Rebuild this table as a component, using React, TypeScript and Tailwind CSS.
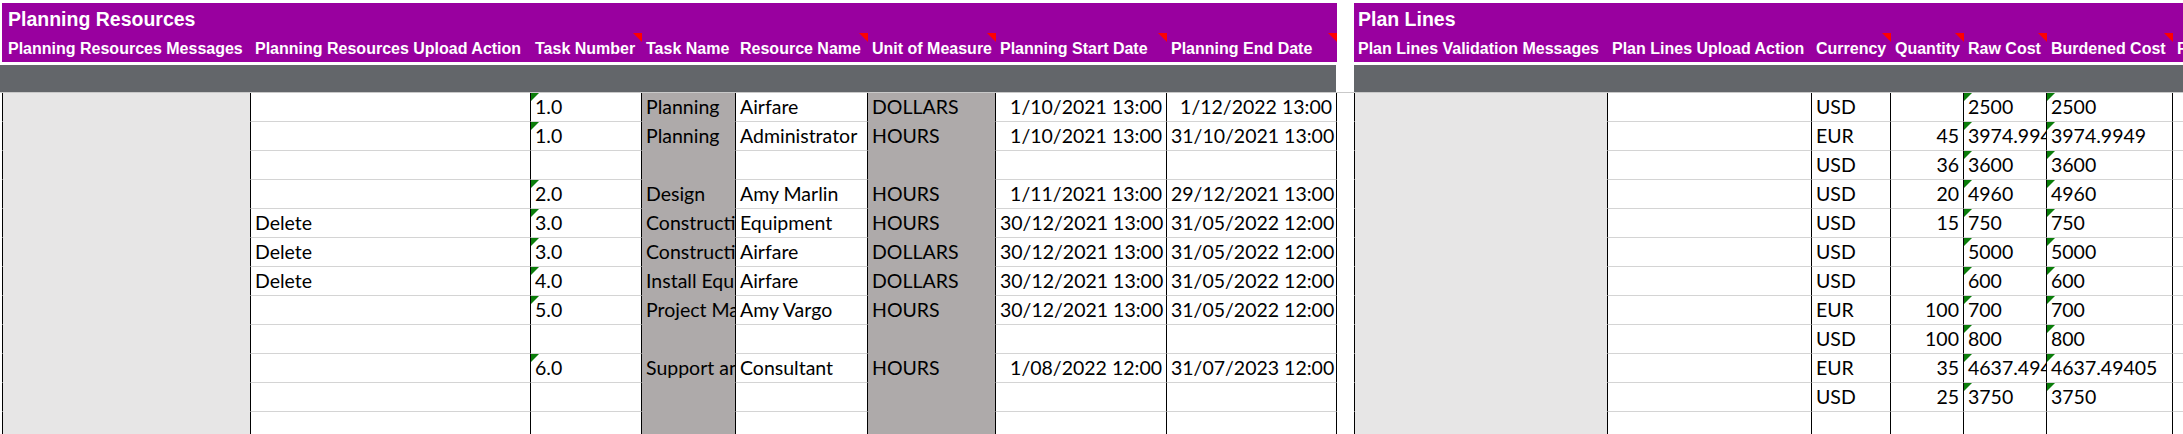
import React from 'react';

type Row = {
  up?: string;
  tn?: string;
  name?: string;
  res?: string;
  uom?: string;
  start?: string;
  end?: string;
  cur?: string;
  qty?: string;
  raw?: string;
  burd?: string;
};

const rows: Row[] = [
  { tn: '1.0', name: 'Planning', res: 'Airfare', uom: 'DOLLARS', start: '1/10/2021 13:00', end: '1/12/2022 13:00', cur: 'USD', raw: '2500', burd: '2500' },
  { tn: '1.0', name: 'Planning', res: 'Administrator', uom: 'HOURS', start: '1/10/2021 13:00', end: '31/10/2021 13:00', cur: 'EUR', qty: '45', raw: '3974.9949', burd: '3974.9949' },
  { cur: 'USD', qty: '36', raw: '3600', burd: '3600' },
  { tn: '2.0', name: 'Design', res: 'Amy Marlin', uom: 'HOURS', start: '1/11/2021 13:00', end: '29/12/2021 13:00', cur: 'USD', qty: '20', raw: '4960', burd: '4960' },
  { up: 'Delete', tn: '3.0', name: 'Construction', res: 'Equipment', uom: 'HOURS', start: '30/12/2021 13:00', end: '31/05/2022 12:00', cur: 'USD', qty: '15', raw: '750', burd: '750' },
  { up: 'Delete', tn: '3.0', name: 'Construction', res: 'Airfare', uom: 'DOLLARS', start: '30/12/2021 13:00', end: '31/05/2022 12:00', cur: 'USD', raw: '5000', burd: '5000' },
  { up: 'Delete', tn: '4.0', name: 'Install Equipment', res: 'Airfare', uom: 'DOLLARS', start: '30/12/2021 13:00', end: '31/05/2022 12:00', cur: 'USD', raw: '600', burd: '600' },
  { tn: '5.0', name: 'Project Management', res: 'Amy Vargo', uom: 'HOURS', start: '30/12/2021 13:00', end: '31/05/2022 12:00', cur: 'EUR', qty: '100', raw: '700', burd: '700' },
  { cur: 'USD', qty: '100', raw: '800', burd: '800' },
  { tn: '6.0', name: 'Support and Maintenance', res: 'Consultant', uom: 'HOURS', start: '1/08/2022 12:00', end: '31/07/2023 12:00', cur: 'EUR', qty: '35', raw: '4637.49405', burd: '4637.49405' },
  { cur: 'USD', qty: '25', raw: '3750', burd: '3750' },
  {},
];

// excel-ish cell styles
const cell = 'relative shrink-0 overflow-hidden whitespace-nowrap border-r border-b border-r-black px-[4px] leading-[28px]';
const white = 'bg-white border-b-[#d4d4d4]';
const light = 'bg-[#e7e6e6] border-b-[#e7e6e6]';
const dark = 'bg-[#aeaaaa] border-b-[#aeaaaa]';

const RedFlag = () => (
  <svg className="absolute top-0 right-0" width="9" height="9" viewBox="0 0 9 9">
    <polygon points="0,0 9,0 9,9" fill="#ff0000" />
  </svg>
);

const GreenFlag = () => (
  <svg className="absolute top-0 left-0" width="8" height="8" viewBox="0 0 8 8">
    <polygon points="0,0 8,0 0,8" fill="#0a7d0a" />
  </svg>
);

const Head: React.FC<{ w: string; label: string; flag?: boolean }> = ({ w, label, flag }) => (
  <div className={`relative shrink-0 overflow-hidden whitespace-nowrap h-[29px] pl-[4px] pt-[3px] leading-[26px] ${w}`}>
    {label}
    {flag && <RedFlag />}
  </div>
);

const App: React.FC = () => {
  return (
    <div className="w-[2183px] h-[434px] overflow-hidden bg-white pt-[3px] flex flex-col">
      {/* purple headers */}
      <div className="flex shrink-0 font-['Liberation_Sans',Arial,sans-serif] font-bold text-white text-[16px]">
        <div className="w-[2px] shrink-0" />
        <div className="w-[1335px] shrink-0 bg-[#99009f]">
          <div className="h-[30px] pl-[6px] pt-[3px] leading-[27px] text-[19.5px]">Planning Resources</div>
          <div className="flex">
            <Head w="w-[249px] pl-[6px]" label="Planning Resources Messages" />
            <Head w="w-[280px]" label="Planning Resources Upload Action" />
            <Head w="w-[111px]" label="Task Number" flag />
            <Head w="w-[94px]" label="Task Name" />
            <Head w="w-[132px]" label="Resource Name" flag />
            <Head w="w-[128px]" label="Unit of Measure" flag />
            <Head w="w-[171px]" label="Planning Start Date" flag />
            <Head w="w-[170px]" label="Planning End Date" flag />
          </div>
        </div>
        <div className="w-[17px] shrink-0" />
        <div className="flex-1 min-w-0 bg-[#99009f] overflow-hidden">
          <div className="h-[30px] pl-[4px] pt-[3px] leading-[27px] text-[19.5px]">Plan Lines</div>
          <div className="flex">
            <Head w="w-[254px]" label="Plan Lines Validation Messages" />
            <Head w="w-[204px]" label="Plan Lines Upload Action" />
            <Head w="w-[79px]" label="Currency" flag />
            <Head w="w-[73px]" label="Quantity" flag />
            <Head w="w-[83px]" label="Raw Cost" flag />
            <Head w="w-[126px]" label="Burdened Cost" flag />
            <Head w="w-[120px]" label="Raw Cost Rate" />
          </div>
        </div>
      </div>

      <div className="h-[3px] shrink-0" />

      {/* gray band */}
      <div className="flex h-[28px] shrink-0 border-b border-b-[#c9c9c9]">
        <div className="w-[1336px] shrink-0 bg-[#63666a]" />
        <div className="w-[18px] shrink-0" />
        <div className="flex-1 bg-[#63666a]" />
      </div>

      {/* data rows */}
      <div className="font-['Lato',sans-serif] text-[19.5px] text-black">
        {rows.map((r, i) => (
          <div key={i} className="flex h-[29px]">
            <div className="w-[2px] shrink-0" />
            <div className={`${cell} ${light} w-[249px] border-l border-l-black`} />
            <div className={`${cell} ${white} w-[280px]`}>{r.up}</div>
            <div className={`${cell} ${white} w-[111px]`}>
              {r.tn && <GreenFlag />}
              {r.tn}
            </div>
            <div className={`${cell} ${dark} w-[94px]`}>{r.name}</div>
            <div className={`${cell} ${white} w-[132px]`}>{r.res}</div>
            <div className={`${cell} ${dark} w-[128px]`}>{r.uom}</div>
            <div className={`${cell} ${white} w-[171px] text-right`}>{r.start}</div>
            <div className={`${cell} ${white} w-[170px] text-right`}>{r.end}</div>

            <div className="w-[17px] shrink-0" />

            <div className={`${cell} ${light} w-[254px] border-l border-l-black`} />
            <div className={`${cell} ${white} w-[204px]`} />
            <div className={`${cell} ${white} w-[79px]`}>{r.cur}</div>
            <div className={`${cell} ${white} w-[73px] text-right`}>{r.qty}</div>
            <div className={`${cell} ${white} w-[83px]`}>
              {r.raw && <GreenFlag />}
              {r.raw}
            </div>
            <div className={`${cell} ${white} w-[126px]`}>
              {r.burd && <GreenFlag />}
              {r.burd}
            </div>
            <div className={`${cell} ${white} w-[120px]`} />
          </div>
        ))}
      </div>
    </div>
  );
};

export default App;
